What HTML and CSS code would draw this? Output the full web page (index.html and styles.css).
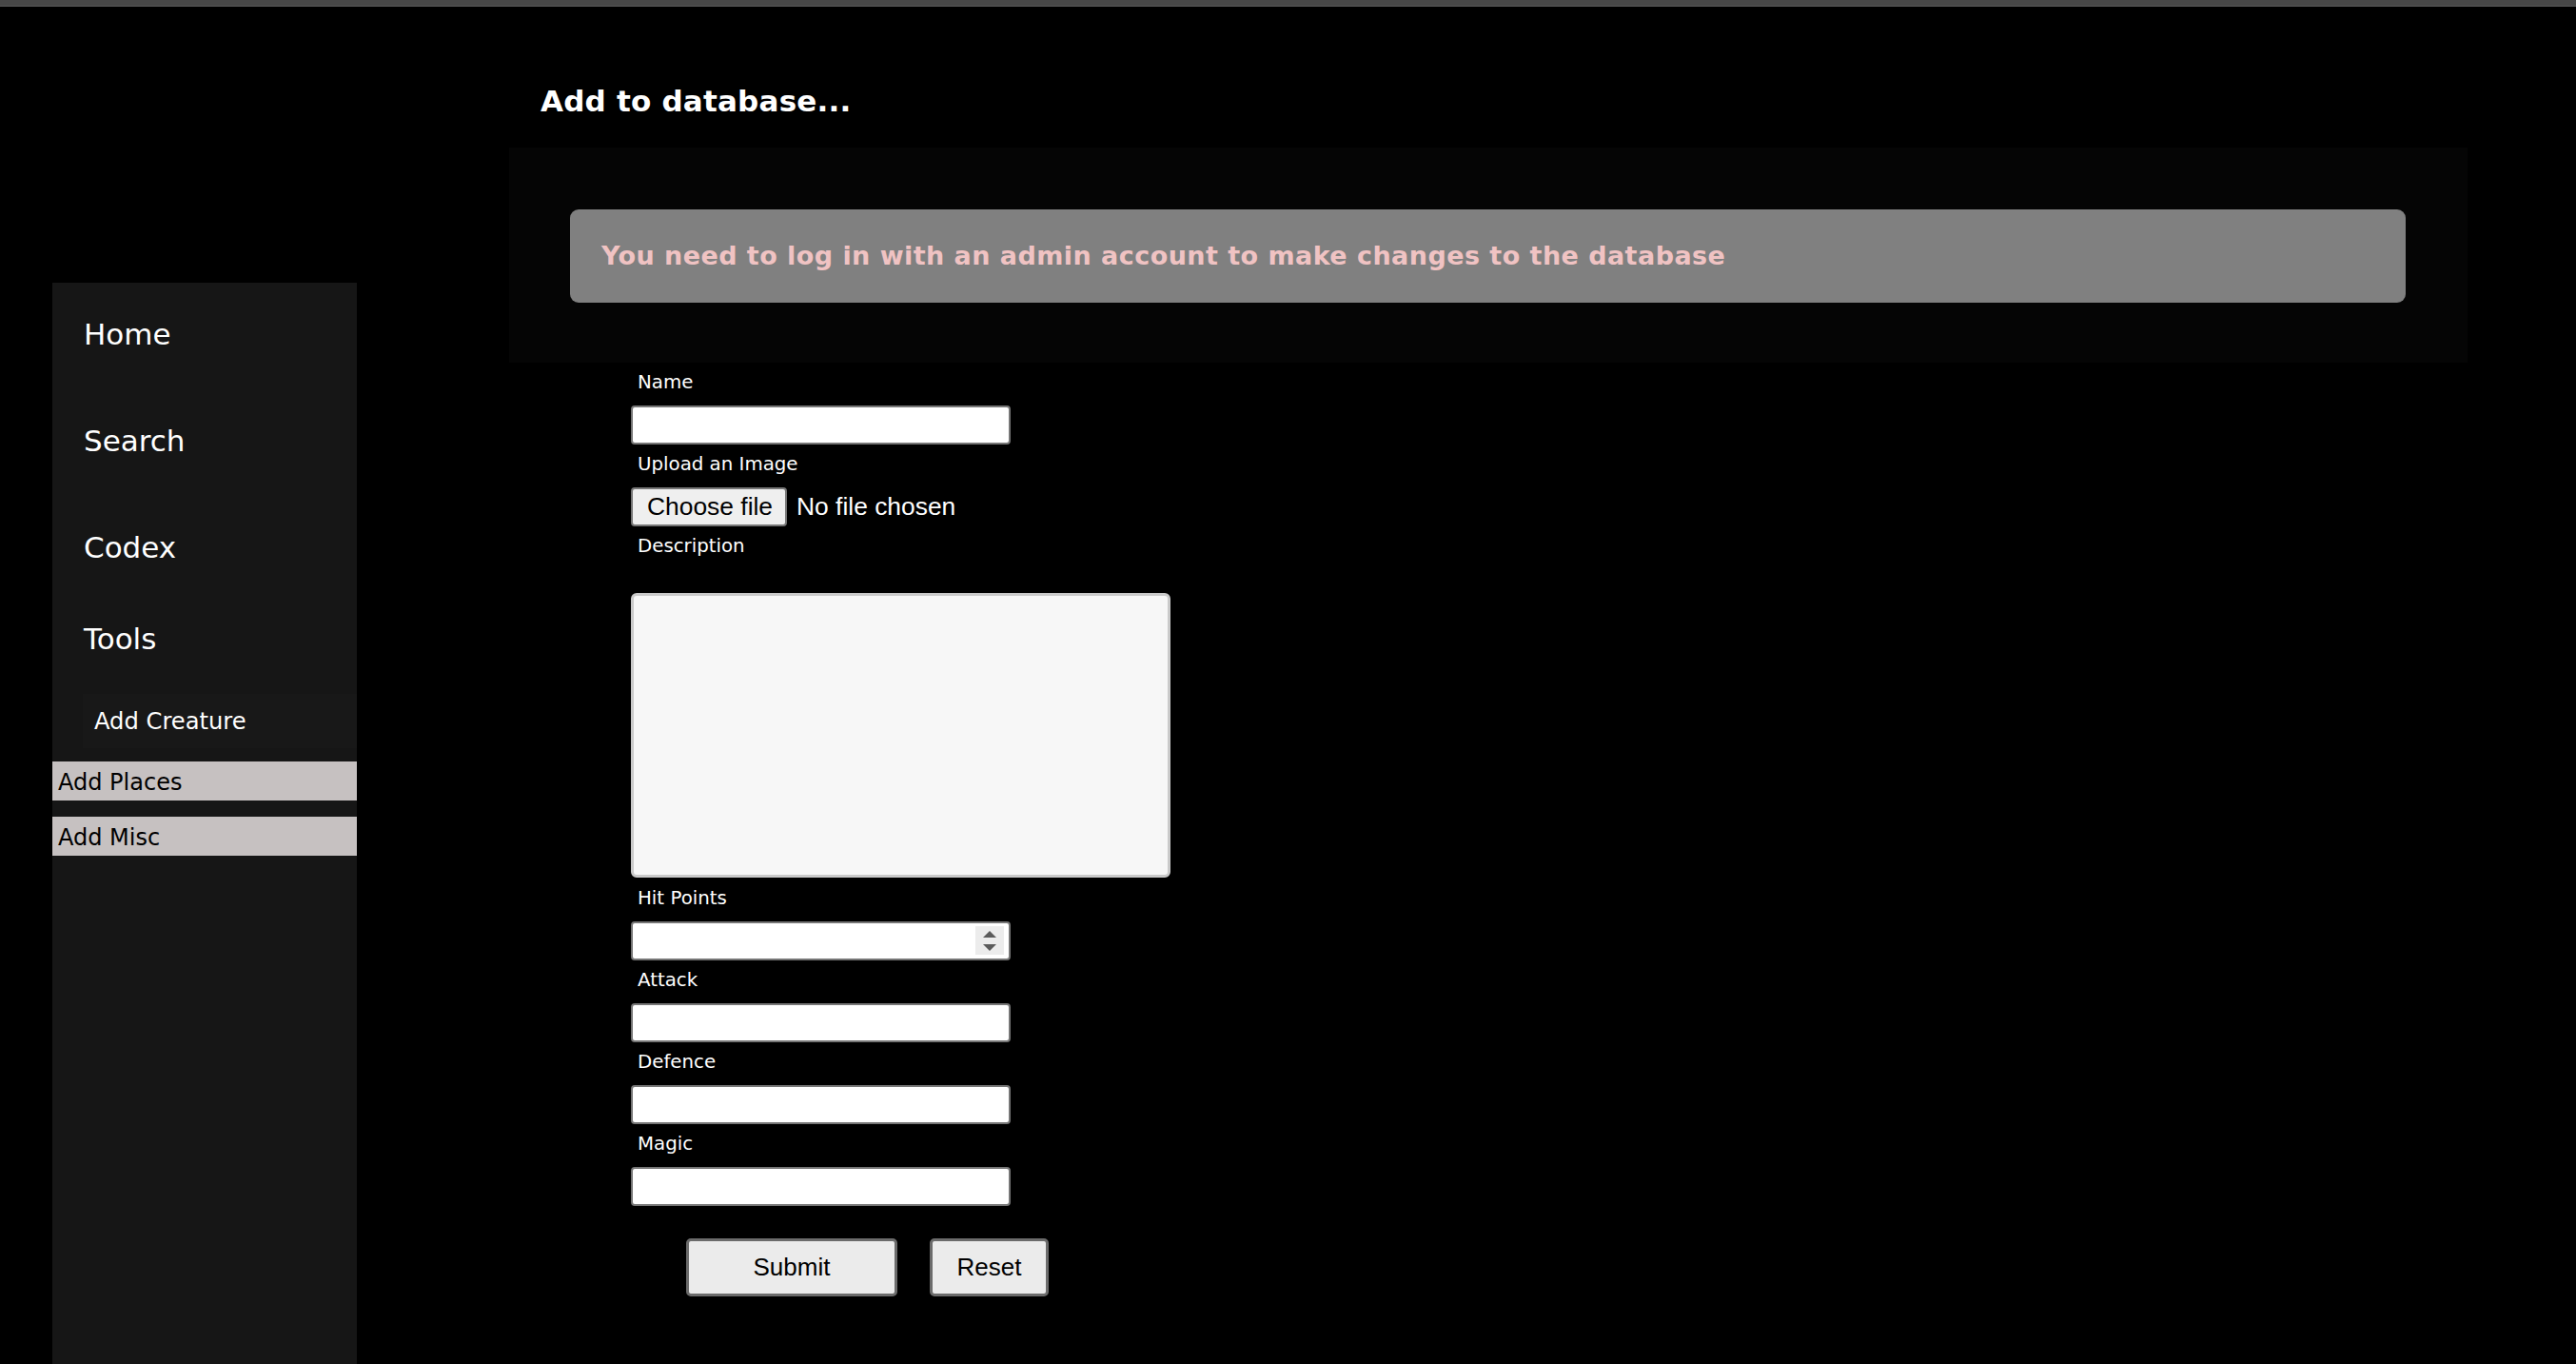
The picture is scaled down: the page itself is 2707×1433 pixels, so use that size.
FILE: index.html
```html
<!DOCTYPE html>
<html lang="en">
<head>
<meta charset="utf-8">
<title>Add to database</title>
<link rel="stylesheet" href="styles.css">
</head>
<body>
<div class="topbar"></div>
<div class="layout">
  <nav class="sidebar">
    <a class="nav-link" href="#">Home</a>
    <a class="nav-link" href="#">Search</a>
    <a class="nav-link nav-link--tight" href="#">Codex</a>
    <div class="nav-tools">Tools</div>
    <a class="sub-current" href="#">Add Creature</a>
    <a class="sub-link" href="#">Add Places</a>
    <a class="sub-link" href="#">Add Misc</a>
  </nav>
  <main class="main">
    <h1 class="title">Add to database...</h1>
    <section class="panel">
      <div class="alert">You need to log in with an admin account to make changes to the database</div>
    </section>
    <form class="form">
      <label class="field-label" for="name">Name</label>
      <input class="field-input" id="name" type="text">

      <label class="field-label" for="image">Upload an Image</label>
      <div class="file-row">
        <span class="file-btn">Choose file</span>
        <span class="file-name">No file chosen</span>
      </div>

      <label class="field-label field-label--desc" for="desc">Description</label>
      <textarea class="field-area" id="desc"></textarea>

      <label class="field-label" for="hp">Hit Points</label>
      <div class="number-wrap">
        <input class="field-input field-input--number" id="hp" type="number">
        <span class="spinner">
          <svg width="30" height="30" viewBox="0 0 30 30">
            <polygon points="8,12 15,5 22,12" fill="#5b5b5b"/>
            <polygon points="8,19 15,26 22,19" fill="#5b5b5b"/>
          </svg>
        </span>
      </div>

      <label class="field-label" for="atk">Attack</label>
      <input class="field-input" id="atk" type="text">

      <label class="field-label" for="def">Defence</label>
      <input class="field-input" id="def" type="text">

      <label class="field-label" for="mag">Magic</label>
      <input class="field-input" id="mag" type="text">

      <div class="actions">
        <button class="btn btn--submit" type="button">Submit</button>
        <button class="btn btn--reset" type="button">Reset</button>
      </div>
    </form>
  </main>
</div>
</body>
</html>
```

FILE: styles.css
```css
html, body {
  margin: 0;
  padding: 0;
  background: #000;
  height: 100%;
  overflow: hidden;
}

body {
  font-family: "DejaVu Sans", Verdana, sans-serif;
  color: #fff;
}

.topbar {
  height: 6px;
  background: #474747;
  border-bottom: 1px solid #5a5a5a;
}

.layout {
  display: flex;
  min-height: calc(100vh - 7px);
}

/* Sidebar */
.sidebar {
  margin-left: 55px;
  margin-top: 290px;
  width: 320px;
  flex: 0 0 320px;
  background: #161616;
  padding-top: 36px;
  box-sizing: border-box;
  display: flex;
  flex-direction: column;
}

.nav-link {
  display: block;
  color: #fff;
  text-decoration: none;
  font-size: 31px;
  line-height: 36px;
  margin-left: 33px;
  margin-bottom: 76px;
}

.nav-link--tight {
  margin-bottom: 60px;
}

.nav-tools {
  font-size: 31px;
  line-height: 36px;
  margin-left: 33px;
  margin-bottom: 40px;
}

.sub-current {
  display: block;
  margin-left: 32px;
  padding: 15px 0 14px 12px;
  font-size: 24.2px;
  line-height: 28px;
  color: #fff;
  text-decoration: none;
  background: #181818;
  margin-bottom: 14px;
}

.sub-link {
  display: block;
  padding: 8px 6px 5px;
  font-size: 24px;
  line-height: 28px;
  color: #000;
  text-decoration: none;
  background: #c6c1c1;
  margin-bottom: 17px;
}

/* Main */
.main {
  margin-left: 160px;
  width: 2058px;
  flex: 0 0 2058px;
}

.title {
  margin: 81px 0 31px 33px;
  font-size: 31px;
  line-height: 36px;
  font-weight: bold;
  letter-spacing: 0.2px;
  color: #fff;
}

.panel {
  background: #050505;
  padding: 65px 65px 63px 64px;
}

.alert {
  background: #808080;
  border-radius: 9px;
  padding: 33px;
  font-size: 27px;
  line-height: 32px;
  font-weight: bold;
  letter-spacing: 0.45px;
  color: #f0c3c3;
}

/* Form */
.form {
  margin-left: 128px;
  display: flex;
  flex-direction: column;
  align-items: flex-start;
}

.field-label {
  display: block;
  margin: 9px 0 12px 7px;
  font-size: 19.8px;
  line-height: 24px;
  color: #fff;
}

.field-label--desc {
  margin-bottom: 37px;
}

.field-input {
  box-sizing: border-box;
  width: 399px;
  height: 41px;
  margin: 0;
  padding: 0 8px;
  border: 2px solid #767676;
  border-radius: 4px;
  background: #fff;
  font-family: "Liberation Sans", Arial, sans-serif;
  font-size: 22px;
  outline: none;
}

.field-input--number {
  -moz-appearance: textfield;
}

.field-input--number::-webkit-inner-spin-button,
.field-input--number::-webkit-outer-spin-button {
  -webkit-appearance: none;
  margin: 0;
}

.number-wrap {
  position: relative;
  width: 399px;
  height: 41px;
}

.spinner {
  position: absolute;
  right: 7px;
  top: 5px;
  width: 30px;
  height: 30px;
  background: #ececec;
  display: block;
}

.spinner svg {
  display: block;
}

.file-row {
  display: flex;
  align-items: center;
  gap: 10px;
  height: 41px;
}

.file-btn {
  box-sizing: border-box;
  height: 41px;
  width: 164px;
  display: flex;
  align-items: center;
  padding: 0 0 0 15px;
  border: 2px solid #767676;
  border-radius: 4px;
  background: #efefef;
  color: #000;
  font-family: "Liberation Sans", Arial, sans-serif;
  font-size: 26.4px;
}

.file-name {
  font-family: "Liberation Sans", Arial, sans-serif;
  font-size: 26.4px;
  color: #fff;
}

.field-area {
  box-sizing: border-box;
  width: 567px;
  height: 299px;
  margin: 0 0 1px 0;
  border: 3px solid #cacaca;
  border-radius: 6px;
  background: #f7f7f7;
  resize: none;
  outline: none;
}

.actions {
  display: flex;
  gap: 34px;
  margin: 34px 0 0 58px;
}

.btn {
  box-sizing: border-box;
  height: 61px;
  border: 3px solid #6b6b6b;
  border-radius: 5px;
  background: #ebebeb;
  color: #000;
  font-family: "Liberation Sans", Arial, sans-serif;
  font-size: 26px;
  padding: 0;
}

.btn--submit {
  width: 222px;
}

.btn--reset {
  width: 125px;
}
```
